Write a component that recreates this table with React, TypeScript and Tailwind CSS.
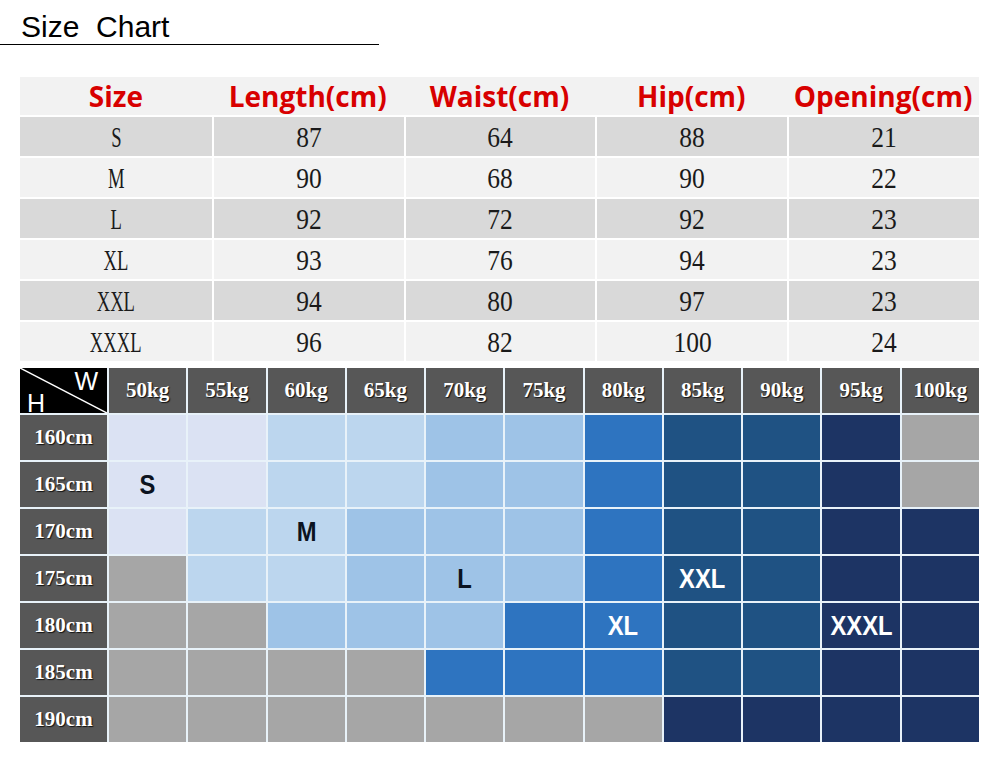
import React from "react";

const sizeRows = [
    ["S", "87", "64", "88", "21"],
    ["M", "90", "68", "90", "22"],
    ["L", "92", "72", "92", "23"],
    ["XL", "93", "76", "94", "23"],
    ["XXL", "94", "80", "97", "23"],
    ["XXXL", "96", "82", "100", "24"],
];

const headers = ["Size", "Length(cm)", "Waist(cm)", "Hip(cm)", "Opening(cm)"];

const weights = ["50kg", "55kg", "60kg", "65kg", "70kg", "75kg", "80kg", "85kg", "90kg", "95kg", "100kg"];

// one letter per cell, see swatch below
const chart: { height: string; cells: string }[] = [
    { height: "160cm", cells: "aabbccdeefg" },
    { height: "165cm", cells: "aabbccdeefg" },
    { height: "170cm", cells: "abbcccdeeff" },
    { height: "175cm", cells: "gbbcccdeeff" },
    { height: "180cm", cells: "ggcccddeeff" },
    { height: "185cm", cells: "ggggdddeeff" },
    { height: "190cm", cells: "gggggggffff" },
];

const swatch: Record<string, string> = {
    a: "bg-[#dbe2f3]",
    b: "bg-[#bcd6ee]",
    c: "bg-[#9ec3e7]",
    d: "bg-[#2e74c0]",
    e: "bg-[#1f5283]",
    f: "bg-[#1d3464]",
    g: "bg-[#a6a6a6]",
};

const marks: Record<string, { text: string; light: boolean }> = {
    "1-0": { text: "S", light: false },
    "2-2": { text: "M", light: false },
    "3-4": { text: "L", light: false },
    "3-7": { text: "XXL", light: true },
    "4-6": { text: "XL", light: true },
    "4-9": { text: "XXXL", light: true },
};

const serif = "font-['Liberation_Serif',serif]";
const labelText =
    "font-['Liberation_Serif',serif] text-[21px] font-bold text-white [text-shadow:1px_1px_1px_#111]";

export default function App() {
    return (
        <div className="min-h-[759px] w-[1000px] bg-white">
            <div className="w-[379px] border-b border-black pt-[10px] pb-[1px] pl-[21px] font-['Liberation_Sans',Arial,sans-serif] text-[30px] leading-[33px] text-black">
                Size&nbsp;&nbsp;Chart
            </div>

            <div className="ml-[20px] mt-[32px] grid w-[959px] grid-cols-5 gap-y-[2px] bg-white">
                {headers.map((h) => (
                    <div
                        key={h}
                        className="flex h-[38px] items-center justify-center bg-[#f2f2f2] font-['Open_Sans',sans-serif] text-[28px] font-bold whitespace-nowrap text-[#d80000]"
                    >
                        {h}
                    </div>
                ))}
                {sizeRows.map((row, i) =>
                    row.map((cell, j) => (
                        <div
                            key={`${i}-${j}`}
                            className={`flex h-[39px] items-center justify-center ${
                                i % 2 === 0 ? "bg-[#d9d9d9]" : "bg-[#f2f2f2]"
                            } ${j === 0 ? "" : "border-l-2 border-white"}`}
                        >
                            <span
                                className={`${serif} inline-block text-[30px] leading-none text-[#1a1a1a] ${
                                    j === 0 ? "scale-x-[0.62]" : "scale-x-[0.85]"
                                }`}
                            >
                                {cell}
                            </span>
                        </div>
                    ))
                )}
            </div>

            <div className="ml-[20px] mt-[7px] grid w-[959px] grid-cols-[87px_repeat(11,1fr)] gap-[2px] bg-[#e8f2f9]">
                <div className="relative flex h-[45px] flex-col justify-between bg-black px-[7px] font-['Liberation_Sans',Arial,sans-serif] text-[25px] leading-[20px] text-white">
                    <svg className="absolute inset-0 h-full w-full" viewBox="0 0 87 45" preserveAspectRatio="none">
                        <line x1="0" y1="0" x2="87" y2="45" stroke="white" strokeWidth="1.5" />
                    </svg>
                    <span className="mt-[3px] self-end pr-[2px]">W</span>
                    <span className="self-start">H</span>
                </div>
                {weights.map((w) => (
                    <div key={w} className={`flex h-[45px] items-center justify-center bg-[#575757] ${labelText}`}>
                        {w}
                    </div>
                ))}

                {chart.map((row, r) => (
                    <React.Fragment key={row.height}>
                        <div className={`flex h-[45px] items-center justify-center bg-[#575757] ${labelText}`}>
                            {row.height}
                        </div>
                        {row.cells.split("").map((c, k) => {
                            const mark = marks[`${r}-${k}`];
                            return (
                                <div key={k} className={`flex h-[45px] items-center justify-center ${swatch[c]}`}>
                                    {mark && (
                                        <span
                                            className={`inline-block scale-x-[0.85] font-['Liberation_Sans',Arial,sans-serif] text-[28px] font-bold ${
                                                mark.light ? "text-white" : "text-[#0b1320]"
                                            }`}
                                        >
                                            {mark.text}
                                        </span>
                                    )}
                                </div>
                            );
                        })}
                    </React.Fragment>
                ))}
            </div>
        </div>
    );
}
